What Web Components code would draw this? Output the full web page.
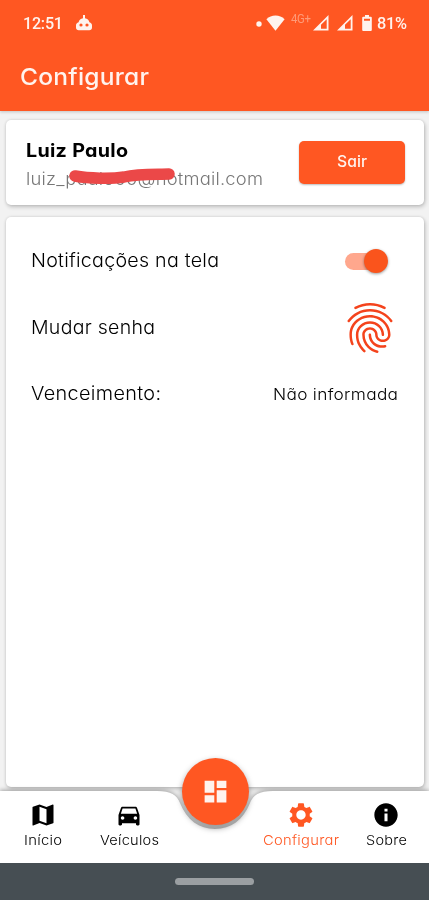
<!DOCTYPE html>
<html lang="pt-BR">
<head>
<meta charset="utf-8">
<title>Configurar</title>
<style>
html,body{margin:0;height:100%;background:#f2f2f2}
body{font-family:Inter,"Open Sans",sans-serif;font-feature-settings:"cv11";color:#111}
</style>
</head>
<body>
<config-screen></config-screen>
<script>
const define = (name, html, init) => customElements.define(name, class extends HTMLElement {
  connectedCallback() {
    if (this.shadowRoot) return;
    const t = document.createElement('template');
    t.innerHTML = html;
    this.attachShadow({mode: 'open'}).append(t.content.cloneNode(true));
    if (init) init.call(this, this.shadowRoot);
  }
});

/* Label that fills the given width: mostly by widening its letters, the rest by tracking */
define('fit-text', `<style>:host{display:block;white-space:pre;line-height:1.2;flex:none}span{display:inline-block;transform-origin:0 50%}</style><span></span>`,
  function (root) {
    const s = root.querySelector('span');
    s.textContent = this.getAttribute('text');
    const w = +this.getAttribute('width');
    this.style.width = w + 'px';
    const n = s.textContent.length;
    const natural = s.getBoundingClientRect().width;
    const stretch = 1 + (w / natural - 1) * .7;
    s.style.letterSpacing = ((w / stretch - natural) / (n - 1)) + 'px';
    s.style.transform = `scaleX(${stretch})`;
  });

const ICONS = {
  map: 'M20.5 3l-.16.03L15 5.1 9 3 3.36 4.9c-.21.07-.36.25-.36.48V20.5c0 .28.22.5.5.5l.16-.03L9 18.9l6 2.1 5.64-1.9c.21-.07.36-.25.36-.48V3.5c0-.28-.22-.5-.5-.5zM15 19l-6-2.11V5l6 2.11V19z',
  car: 'M18.92 6.01C18.72 5.42 18.16 5 17.5 5h-11c-.66 0-1.21.42-1.42 1.01L3 12v8c0 .55.45 1 1 1h1c.55 0 1-.45 1-1v-1h12v1c0 .55.45 1 1 1h1c.55 0 1-.45 1-1v-8l-2.08-5.99zM6.5 16c-.83 0-1.5-.67-1.5-1.5S5.67 13 6.5 13s1.5.67 1.5 1.5S7.33 16 6.5 16zm11 0c-.83 0-1.5-.67-1.5-1.5s.67-1.5 1.5-1.5 1.5.67 1.5 1.5-.67 1.5-1.5 1.5zM5 11l1.5-4.5h11L19 11H5z',
  gear: 'M19.43 12.98c.04-.32.07-.64.07-.98s-.03-.66-.07-.98l2.11-1.65c.19-.15.24-.42.12-.64l-2-3.46c-.12-.22-.39-.3-.61-.22l-2.49 1c-.52-.4-1.08-.73-1.69-.98l-.38-2.65C14.46 2.18 14.25 2 14 2h-4c-.25 0-.46.18-.49.42l-.38 2.65c-.61.25-1.17.59-1.69.98l-2.49-1c-.23-.09-.49 0-.61.22l-2 3.46c-.13.22-.07.49.12.64l2.11 1.65c-.04.32-.07.65-.07.98s.03.66.07.98l-2.11 1.65c-.19.15-.24.42-.12.64l2 3.46c.12.22.39.3.61.22l2.49-1c.52.4 1.08.73 1.69.98l.38 2.65c.03.24.24.42.49.42h4c.25 0 .46-.18.49-.42l.38-2.65c.61-.25 1.17-.59 1.69-.98l2.49 1c.23.09.49 0 .61-.22l2-3.46c.12-.22.07-.49-.12-.64l-2.11-1.65zM12 16c-2.21 0-4-1.79-4-4s1.79-4 4-4 4 1.79 4 4-1.79 4-4 4z',
  info: 'M12 2C6.48 2 2 6.48 2 12s4.48 10 10 10 10-4.48 10-10S17.52 2 12 2zm1.3 15.3h-2.6v-6.6h2.6v6.6zm0-8.3h-2.6V6.6h2.6V9z',
  dashboard: 'M3 13h8V3H3v10zm0 8h8v-6H3v6zm10 0h8V11h-8v10zm0-18v6h8V3h-8z',
  fingerprint: 'M17.81 4.47c-.08 0-.16-.02-.23-.06C15.66 3.42 14 3 12.01 3c-1.98 0-3.86.47-5.57 1.41-.24.13-.54.04-.68-.2-.13-.24-.04-.55.2-.68C7.82 2.52 9.86 2 12.01 2c2.13 0 3.99.47 6.03 1.52.25.13.34.43.21.67-.09.18-.26.28-.44.28zM3.5 9.72c-.1 0-.2-.03-.29-.09-.23-.16-.28-.47-.12-.7.99-1.4 2.25-2.5 3.75-3.27C9.98 4.04 14 4.03 17.15 5.65c1.5.77 2.76 1.86 3.75 3.25.16.22.11.54-.12.7-.23.16-.54.11-.7-.12-.9-1.26-2.04-2.25-3.39-2.94-2.87-1.47-6.54-1.47-9.4.01-1.36.7-2.5 1.7-3.4 2.96-.08.14-.23.21-.39.21zm6.25 12.07c-.13 0-.26-.05-.35-.15-.87-.87-1.34-1.43-2.01-2.64-.69-1.23-1.05-2.73-1.05-4.34 0-2.97 2.54-5.39 5.66-5.39s5.66 2.42 5.66 5.39c0 .28-.22.5-.5.5s-.5-.22-.5-.5c0-2.42-2.09-4.39-4.66-4.39-2.57 0-4.66 1.97-4.66 4.39 0 1.44.32 2.77.93 3.85.64 1.15 1.08 1.64 1.85 2.42.19.2.19.51 0 .71-.11.1-.24.15-.37.15zm7.17-1.85c-1.19 0-2.24-.3-3.1-.89-1.49-1.01-2.38-2.65-2.38-4.39 0-.28.22-.5.5-.5s.5.22.5.5c0 1.41.72 2.74 1.94 3.56.71.48 1.54.71 2.54.71.24 0 .64-.03 1.04-.1.27-.05.53.13.58.41.05.27-.13.53-.41.58-.57.11-1.07.12-1.21.12zM14.91 22c-.04 0-.09-.01-.13-.02-1.59-.44-2.63-1.03-3.72-2.1-1.4-1.39-2.17-3.24-2.17-5.22 0-1.62 1.38-2.94 3.08-2.94 1.7 0 3.08 1.32 3.08 2.94 0 1.07.93 1.94 2.08 1.94s2.08-.87 2.08-1.94c0-3.77-3.25-6.83-7.25-6.83-2.84 0-5.44 1.58-6.61 4.03-.39.81-.59 1.76-.59 2.8 0 .78.07 2.01.67 3.61.1.26-.03.55-.29.64-.26.1-.55-.04-.64-.29-.49-1.31-.73-2.61-.73-3.96 0-1.2.23-2.29.68-3.24 1.33-2.79 4.28-4.6 7.51-4.6 4.55 0 8.25 3.51 8.25 7.83 0 1.62-1.38 2.94-3.08 2.94s-3.08-1.32-3.08-2.94c0-1.07-.93-1.94-2.08-1.94s-2.08.87-2.08 1.94c0 1.71.66 3.31 1.87 4.51.95.94 1.86 1.46 3.27 1.85.27.07.42.35.35.61-.05.23-.26.38-.47.38z'
};
define('md-icon', `<style>:host{display:block;flex:none}svg{display:block;fill:currentColor}</style><svg viewBox="0 0 24 24"><path fill-rule="evenodd"/></svg>`,
  function (root) {
    const size = this.getAttribute('size') || 28, svg = root.querySelector('svg');
    svg.setAttribute('width', size); svg.setAttribute('height', size);
    const p = root.querySelector('path'), name = this.getAttribute('name');
    p.setAttribute('d', ICONS[name]);
    if (name === 'fingerprint') p.removeAttribute('fill-rule');
  });

define('status-bar', `<style>
:host{display:flex;align-items:center;height:46px;box-sizing:border-box;padding:1px 22px 0 23px;font-family:Roboto,sans-serif;font-weight:500;font-size:17px;color:#fff3ee}
svg{display:block;flex:none;fill:#fff3ee}.g{flex:1}
.net{font-size:12px;font-weight:400;color:#ff9a78;margin:-8px 2px 0 6px}
</style>
<fit-text text="12:51" width="40"></fit-text>
<svg width="18" height="18" viewBox="0 0 18 18" style="margin:-1px 0 0 11.500px"><path fill-rule="evenodd" d="M8 1h2v3.200c2.300.3 4 1.900 4.400 4.100 1.600.4 2.600 1.600 2.600 3.200v2c0 1.700-1.200 2.700-2.700 2.700H3.700C2.200 16.200 1 15.200 1 13.500v-2c0-1.600 1-2.800 2.600-3.200C4 6.100 5.700 4.500 8 4.200zM6 9.400a1.600 1.600 0 1 0 0 3.200 1.600 1.600 0 0 0 0-3.200zm6 0a1.600 1.600 0 1 0 0 3.200 1.600 1.600 0 0 0 0-3.200z"/></svg>
<div class="g"></div>
<svg width="6" height="6" viewBox="0 0 6 6"><circle cx="3" cy="3" r="2.700"/></svg>
<svg width="19" height="16" viewBox="0 0 19 16" style="margin:-2px 0 0 4px"><path d="M9.500 15.800L.4 4.300C3 1.900 6 .6 9.500.6s6.500 1.300 9.100 3.700z"/></svg>
<fit-text class="net" text="4G+" width="20"></fit-text>
<svg width="16" height="16" viewBox="0 0 16 16" style="margin-top:-1px"><path fill-rule="evenodd" d="M0 15.500L15.500 0v15.500zM8 9.800v3.900H13.700V4.300z"/></svg>
<svg width="16" height="16" viewBox="0 0 16 16" style="margin:-1px 0 0 8px"><path fill-rule="evenodd" d="M0 15.500L15.500 0v15.500zM8 9.800v3.900H13.700V4.300z"/></svg>
<svg width="10" height="17" viewBox="0 0 10 17" style="margin:0 5px 0 9px"><path fill-rule="evenodd" d="M3 0h4v1.700h1.800q1 0 1 1V15q0 1-1 1H1.200q-1 0-1-1V2.700q0-1 1-1H3zM2 3.700v2h6v-2z"/></svg>
<fit-text text="81%" width="30"></fit-text>`);

define('app-header', `<style>
:host{display:block;height:111px;background:#ff5722;flex:none;box-shadow:0 1px 3px #0003;position:relative}
fit-text{margin:15.500px 0 0 19.500px;font-size:23.500px;font-weight:500;line-height:30px;color:#fff3ee}
</style><status-bar></status-bar><fit-text text="Configurar" width="129"></fit-text>`);

define('app-card', `<style>
:host{display:block;box-sizing:border-box;background:#fff;border-radius:5px;box-shadow:1px 2px 4px #0003,0 0 3px #00000020}
</style><slot></slot>`);

define('profile-card', `<style>
:host{display:block}
.r{display:flex;align-items:center;justify-content:space-between;height:85px;box-sizing:border-box;padding:0 19px 0 19.500px}
.n{font-size:18.500px;font-weight:700;color:#000;line-height:24px}
.e{font-size:17.500px;font-weight:300;color:#777;line-height:24px;margin-top:5px}
.m{position:relative;margin-top:3px}
svg{position:absolute;left:43px;top:29px}
button{all:unset;width:106px;height:43px;border-radius:5px;background:#ff5722;color:#fff3ee;display:flex;align-items:center;justify-content:center;box-shadow:0 1px 2px #0004;font-size:15.500px;font-weight:500}
</style><app-card><div class="r"><div class="m">
<fit-text class="n" text="Luiz Paulo" width="102"></fit-text>
<fit-text class="e" text="luiz_paulo00@hotmail.com" width="237"></fit-text>
<svg width="108" height="20" viewBox="0 0 108 20"><path d="M6 9C20 11.500 42 12 55 10C70 6.500 88 7.500 100 7" fill="none" stroke="#eb4848" stroke-width="11.500" stroke-linecap="round"/></svg>
</div><button><fit-text text="Sair" width="30"></fit-text></button></div></app-card>`);

define('setting-row', `<style>
:host{display:flex;align-items:center;justify-content:space-between;height:66.500px;font-size:18.500px;font-weight:300;color:#000}
</style><slot></slot>`);

define('toggle-switch', `<style>
:host{display:flex;align-items:center;justify-content:flex-end;width:34px;height:17px;border-radius:9px;background:#ffa78d}
i{width:24px;height:24px;border-radius:50%;background:#fa541c;box-shadow:0 1px 3px #0006;flex:none;margin-right:-9px}
</style><i></i>`);

define('settings-card', `<style>
:host{display:block}app-card{height:570px;padding:11px 26px 0 24.500px}
md-icon{color:#f4431c}
.t{margin-top:-1.500px}
.v{font-size:16px}
</style><app-card>
<setting-row><fit-text class="t" text="Notificações na tela" width="188"></fit-text><toggle-switch style="margin-right:19px"></toggle-switch></setting-row>
<setting-row><fit-text class="t" text="Mudar senha" width="124"></fit-text><md-icon name="fingerprint" size="60" style="margin-right:-2px"></md-icon></setting-row>
<setting-row><fit-text class="t" text="Venceimento:" width="130"></fit-text><fit-text class="v" text="Não informada" width="125"></fit-text></setting-row>
</app-card>`);

define('nav-item', `<style>
:host{display:flex;flex-direction:column;align-items:center;color:#000}
:host([active]){color:#ff5722}
fit-text{font-size:13.500px;font-weight:300;line-height:18px;margin-top:2px}
</style><md-icon></md-icon><fit-text></fit-text>`,
  function (root) {
    const old = root.querySelector('md-icon'), label = root.querySelector('fit-text');
    const icon = document.createElement('md-icon');
    icon.setAttribute('name', this.getAttribute('icon'));
    old.replaceWith(icon);
    const t = document.createElement('fit-text');
    t.setAttribute('text', this.getAttribute('label'));
    t.setAttribute('width', this.getAttribute('label-width'));
    label.replaceWith(t);
  });

define('bottom-nav', `<style>
:host{display:block;position:relative;height:72px;flex:none}
.bg{position:absolute;inset:0;overflow:visible;filter:drop-shadow(0 -1px 2px #0005)}
.row{position:relative;display:grid;grid-template-columns:86px 86px 86px 85px 86px;padding-top:10px}
.fab{position:absolute;left:181.500px;top:-33.500px;width:67px;height:67px;border-radius:50%;background:#ff5722;color:#fff3ee;display:grid;place-items:center;box-shadow:0 3px 6px #0006}
</style>
<svg class="bg" width="429" height="72" viewBox="0 0 429 72"><path fill="#fff" d="M0 0H157C171 0 177 4 180 12C187 29 199 38 215 38C231 38 243 29 250 12C253 4 259 0 273 0H429V72H0Z"/></svg>
<div class="row">
<nav-item icon="map" label="Início" label-width="38"></nav-item>
<nav-item icon="car" label="Veículos" label-width="59"></nav-item><span></span>
<nav-item icon="gear" label="Configurar" label-width="76" active></nav-item>
<nav-item icon="info" label="Sobre" label-width="41"></nav-item>
</div>
<div class="fab"><md-icon name="dashboard" size="29"></md-icon></div>`);

define('system-nav', `<style>
:host{display:grid;place-items:center;height:37px;background:#464e53;flex:none;position:relative}
i{width:79px;height:7px;border-radius:4px;background:#9b9fa2}
</style><i></i>`);

define('config-screen', `<style>
:host{display:flex;flex-direction:column;height:900px;width:429px;overflow:hidden;background:#f2f2f2}
main{display:flex;flex-direction:column;gap:12px;padding:9px 5px 0 6px;flex:1;min-height:0}
</style><app-header></app-header><main><profile-card></profile-card><settings-card></settings-card></main><bottom-nav></bottom-nav><system-nav></system-nav>`);
</script>
</body>
</html>
